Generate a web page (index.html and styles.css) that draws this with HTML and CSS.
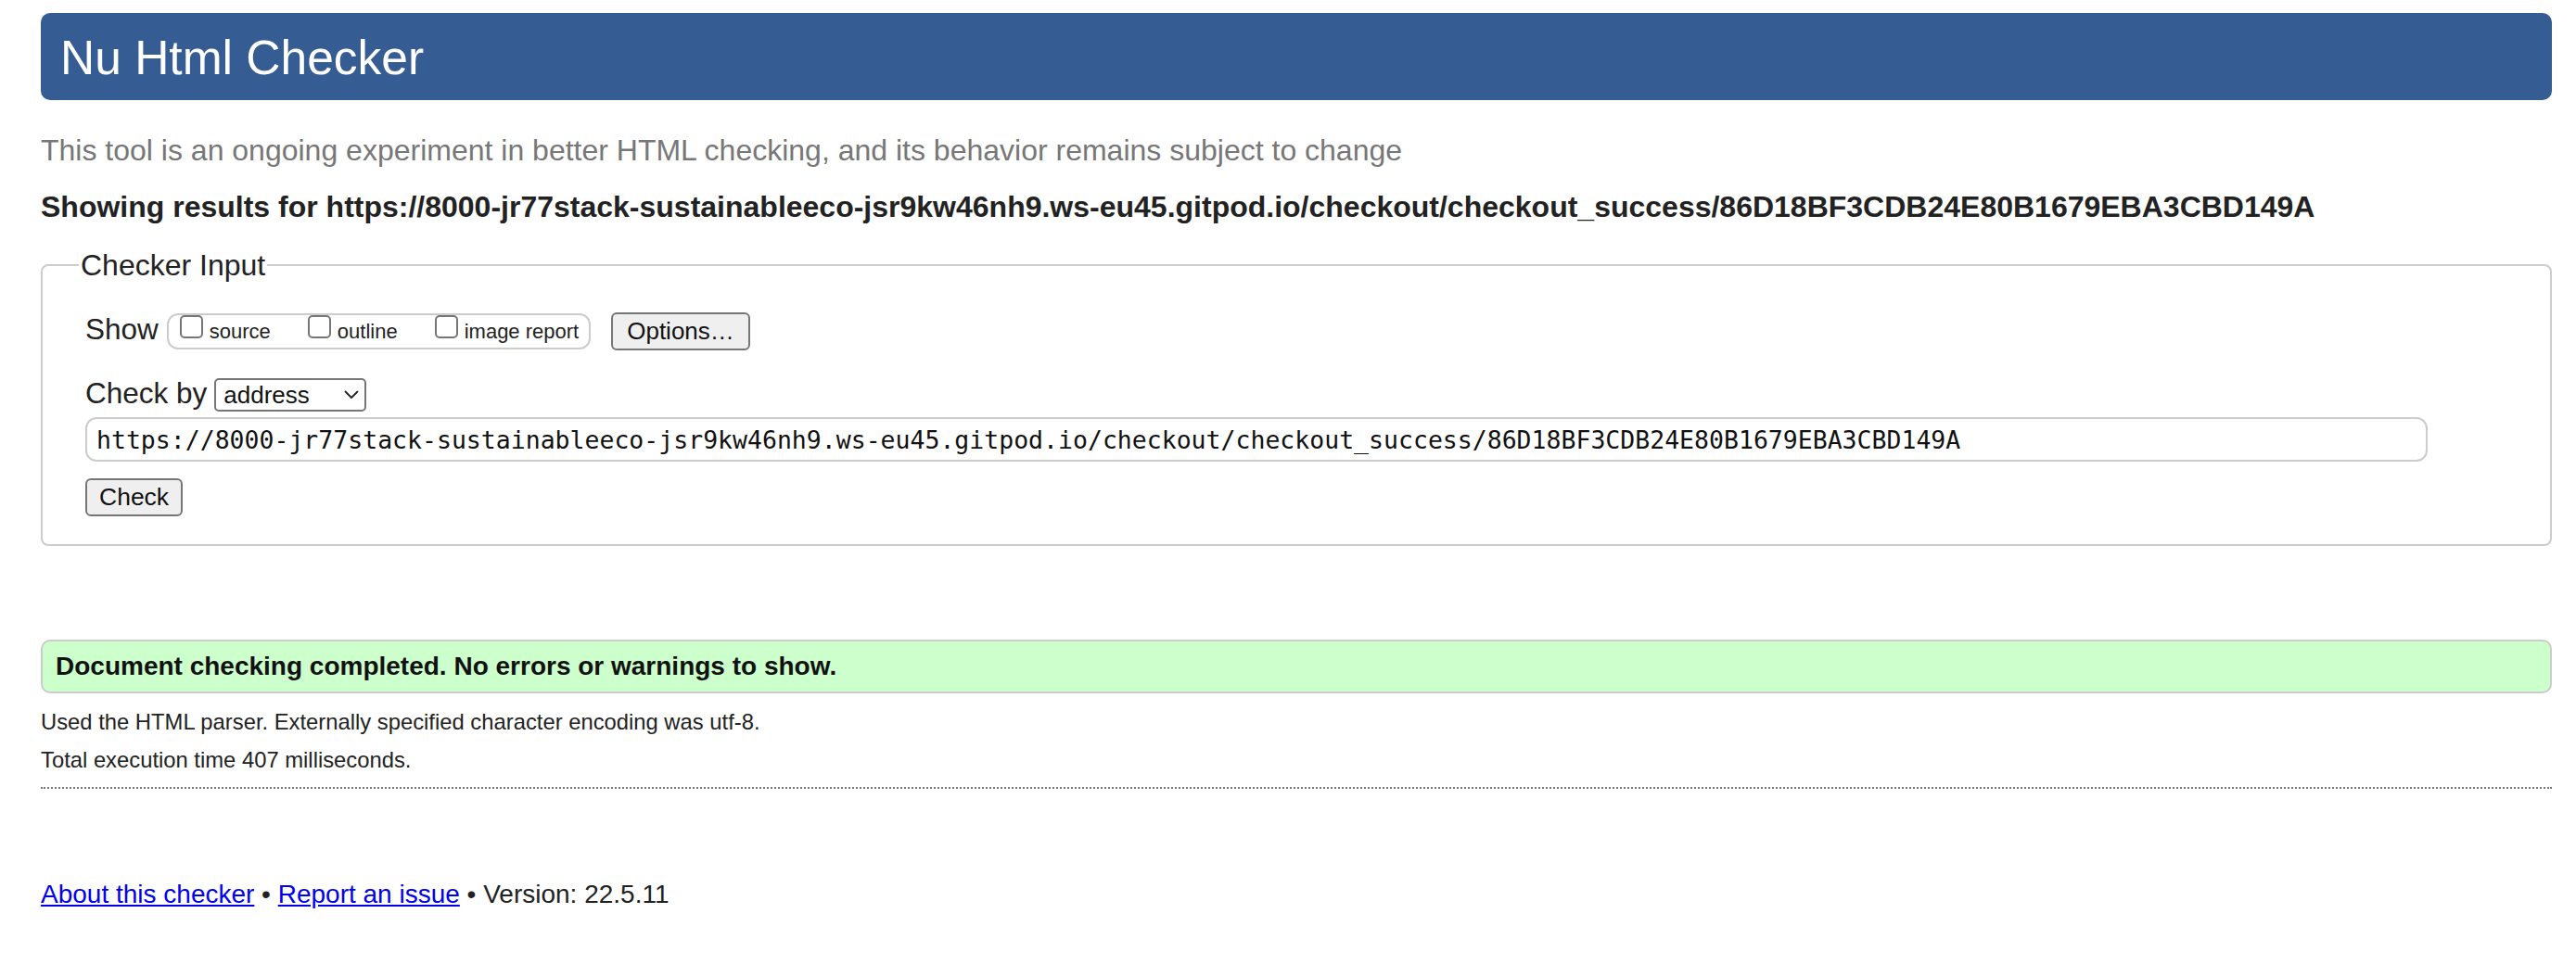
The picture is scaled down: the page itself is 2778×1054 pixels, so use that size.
FILE: index.html
```html
<!DOCTYPE html>
<html lang="en">
<head>
<meta charset="utf-8">
<title>Nu Html Checker</title>
<link rel="stylesheet" href="styles.css">
</head>
<body>
<header class="banner"><h1 class="title">Nu Html Checker</h1></header>
<p class="tagline">This tool is an ongoing experiment in better HTML checking, and its behavior remains subject to change</p>
<p class="results-for">Showing results for https://8000-jr77stack-sustainableeco-jsr9kw46nh9.ws-eu45.gitpod.io/checkout/checkout_success/86D18BF3CDB24E80B1679EBA3CBD149A</p>
<form class="checker-form" action="#">
  <fieldset class="checker-input">
    <legend class="checker-legend">Checker Input</legend>
    <div class="row row-show">
      <span class="row-label">Show</span>
      <div class="show-group">
        <label class="show-option"><input type="checkbox" class="check"><span class="option-text">source</span></label>
        <label class="show-option"><input type="checkbox" class="check"><span class="option-text">outline</span></label>
        <label class="show-option"><input type="checkbox" class="check"><span class="option-text">image report</span></label>
      </div>
      <button type="button" class="btn btn-options">Options…</button>
    </div>
    <div class="row row-by">
      <span class="row-label">Check by</span>
      <span class="select-wrap">
        <select class="select"><option>address</option></select>
        <svg class="chevron" width="16" height="10" viewBox="0 0 16 10" aria-hidden="true"><polyline points="1.5,1.5 8,8 14.5,1.5" fill="none" stroke="#222" stroke-width="1.8" stroke-linecap="round" stroke-linejoin="round"/></svg>
      </span>
    </div>
    <input class="url-input" type="text" value="https://8000-jr77stack-sustainableeco-jsr9kw46nh9.ws-eu45.gitpod.io/checkout/checkout_success/86D18BF3CDB24E80B1679EBA3CBD149A">
    <div class="row row-submit"><button type="button" class="btn btn-check">Check</button></div>
  </fieldset>
</form>
<div class="success">Document checking completed. No errors or warnings to show.</div>
<p class="details details-first">Used the HTML parser. Externally specified character encoding was utf-8.</p>
<p class="details details-second">Total execution time 407 milliseconds.</p>
<div class="rule"></div>
<p class="footer"><a class="footer-link" href="#">About this checker</a> • <a class="footer-link" href="#">Report an issue</a> • Version: 22.5.11</p>
</body>
</html>
```

FILE: styles.css
```css
html, body {
  background: #ffffff;
}
body {
  margin: 0;
  padding: 14px 26px 0 44px;
  font-family: "Liberation Sans", Arial, Helvetica, sans-serif;
  color: #222222;
}
.banner {
  height: 94px;
  box-sizing: border-box;
  background: #365d93;
  border-radius: 10px;
  padding: 2px 0 0 21px;
}
.title {
  margin: 0;
  font-size: 51.5px;
  font-weight: normal;
  line-height: 92px;
  color: #ffffff;
}
.tagline {
  margin: 34px 0 0;
  font-size: 32px;
  line-height: 40px;
  color: #777777;
}
.results-for {
  margin: 21px 0 0;
  font-size: 32px;
  line-height: 40px;
  font-weight: bold;
  color: #222222;
  white-space: nowrap;
}
.checker-form {
  margin: 0;
}
.checker-input {
  margin: 25px 0 0;
  padding: 33px 0 30px 46px;
  border: 2px solid #cccccc;
  border-radius: 8px;
  min-width: 0;
}
.checker-legend {
  margin-left: -7px;
  padding: 0 2px;
  font-size: 32px;
  line-height: 36px;
  color: #222222;
}
.row {
  display: flex;
  align-items: flex-start;
}
.row-show {
  height: 41px;
}
.row-label {
  font-size: 31.5px;
  line-height: 36px;
  color: #222222;
}
.show-group {
  display: flex;
  align-items: flex-start;
  box-sizing: border-box;
  height: 39px;
  margin: 1px 0 0 9px;
  padding: 0 11px 0 12px;
  border: 2px solid #cccccc;
  border-radius: 12px;
}
.show-option {
  display: flex;
  align-items: flex-start;
  gap: 7px;
  margin-right: 40px;
}
.show-option:last-child {
  margin-right: 0;
}
.check {
  appearance: none;
  -webkit-appearance: none;
  width: 25px;
  height: 25px;
  margin: 0;
  box-sizing: border-box;
  border: 2px solid #767676;
  border-radius: 5px;
  background: #ffffff;
}
.option-text {
  margin-top: 5px;
  font-size: 22px;
  line-height: 26px;
  color: #222222;
}
.btn {
  appearance: none;
  -webkit-appearance: none;
  box-sizing: border-box;
  height: 41px;
  margin: 0;
  background: #efefef;
  border: 2px solid #767676;
  border-radius: 6px;
  font-family: "Liberation Sans", Arial, Helvetica, sans-serif;
  font-size: 26px;
  color: #111111;
  line-height: 37px;
}
.btn-options {
  margin-left: 22px;
  padding: 0 15px;
}
.row-by {
  height: 38px;
  margin-top: 28px;
}
.select-wrap {
  position: relative;
  display: block;
  margin: 2px 0 0 8px;
}
.select {
  appearance: none;
  -webkit-appearance: none;
  display: block;
  box-sizing: border-box;
  width: 164px;
  height: 36px;
  margin: 0;
  padding: 0 30px 0 8px;
  background: #ffffff;
  border: 2px solid #767676;
  border-radius: 5px;
  font-family: "Liberation Sans", Arial, Helvetica, sans-serif;
  font-size: 26px;
  color: #111111;
}
.chevron {
  position: absolute;
  right: 8px;
  top: 13px;
  pointer-events: none;
}
.url-input {
  display: block;
  box-sizing: border-box;
  width: 2526px;
  height: 48px;
  margin: 6px 0 0;
  padding: 0 10px;
  border: 2px solid #cccccc;
  border-radius: 12px;
  background: #ffffff;
  font-family: "DejaVu Sans Mono", Menlo, monospace;
  font-size: 26.5px;
  color: #111111;
  outline: none;
}
.row-submit {
  margin-top: 18px;
}
.btn-check {
  padding: 0 13px;
  font-size: 26.5px;
}
.success {
  margin-top: 101px;
  box-sizing: border-box;
  height: 58px;
  padding: 0 14px;
  background: #ccffcc;
  border: 2px solid #cccccc;
  border-radius: 10px;
  font-size: 28px;
  font-weight: bold;
  line-height: 54px;
  color: #111111;
}
.details {
  margin: 0;
  font-size: 23.8px;
  line-height: 30px;
  color: #222222;
}
.details-first {
  margin-top: 16px;
}
.details-second {
  margin-top: 11px;
}
.rule {
  margin-top: 14px;
  height: 0;
  border-top: 2px dotted #777777;
}
.footer {
  margin: 96px 0 0;
  font-size: 28px;
  line-height: 36px;
  color: #222222;
}
.footer-link {
  color: #0000ee;
  text-decoration: underline;
}
```
